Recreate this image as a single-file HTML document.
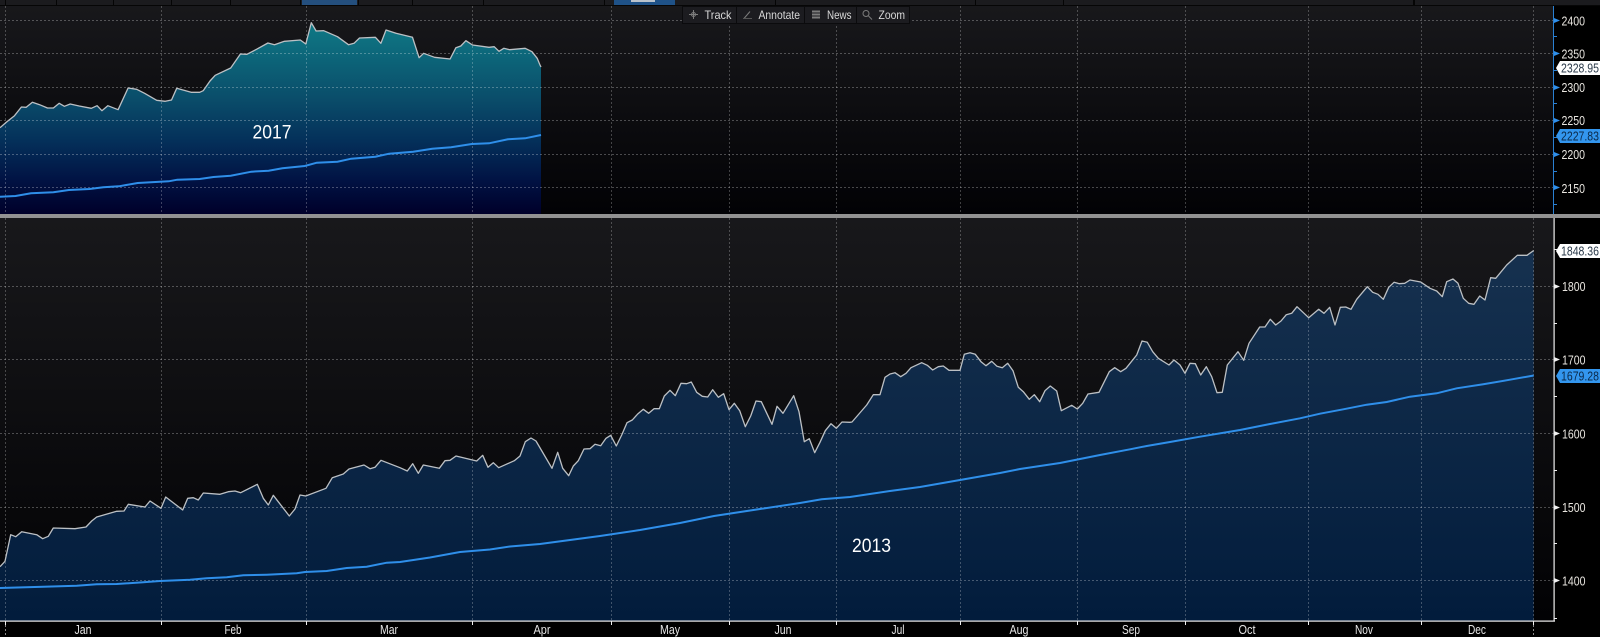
<!DOCTYPE html>
<html><head><meta charset="utf-8"><title>Chart</title>
<style>
html,body{margin:0;padding:0;background:#000;width:1600px;height:637px;overflow:hidden}
svg{display:block}
text{font-family:"Liberation Sans",sans-serif}
</style></head><body>
<svg xmlns="http://www.w3.org/2000/svg" width="1600" height="637" viewBox="0 0 1600 637">
<defs>
<linearGradient id="bg1" x1="0" y1="0" x2="0" y2="1"><stop offset="0" stop-color="#18181b"/><stop offset="1" stop-color="#020205"/></linearGradient>
<linearGradient id="bg2" x1="0" y1="0" x2="0" y2="1"><stop offset="0" stop-color="#18181b"/><stop offset="1" stop-color="#020204"/></linearGradient>
<linearGradient id="f1" gradientUnits="userSpaceOnUse" x1="0" y1="22" x2="0" y2="214"><stop offset="0" stop-color="#0f7a86"/><stop offset=".4" stop-color="#0a4d6a"/><stop offset=".62" stop-color="#04305a"/><stop offset=".82" stop-color="#011344"/><stop offset="1" stop-color="#00002a"/></linearGradient>
<linearGradient id="f2" gradientUnits="userSpaceOnUse" x1="0" y1="250" x2="0" y2="621"><stop offset="0" stop-color="#16314f"/><stop offset="1" stop-color="#021c3c"/></linearGradient>
</defs>
<rect width="1600" height="637" fill="#000"/>
<!-- top strip -->
<rect x="0" y="0" width="1600" height="5" fill="#1b1b1e"/>
<rect x="0" y="5" width="1600" height="1" fill="#060606"/>
<g fill="#050505">
<rect x="5" y="0" width="1" height="5"/><rect x="56" y="0" width="1" height="5"/><rect x="113" y="0" width="1" height="5"/><rect x="171" y="0" width="1" height="5"/><rect x="230" y="0" width="1" height="5"/><rect x="300" y="0" width="1" height="5"/><rect x="358" y="0" width="1" height="5"/><rect x="412" y="0" width="1" height="5"/><rect x="483" y="0" width="1" height="5"/><rect x="604" y="0" width="1" height="5"/><rect x="775" y="0" width="1" height="5"/><rect x="975" y="0" width="1" height="5"/><rect x="1063" y="0" width="1" height="5"/><rect x="1413" y="0" width="2" height="5"/>
</g>
<rect x="302" y="0" width="55" height="5" fill="#244f7e"/>
<rect x="614" y="0" width="61" height="5" fill="#1f5288"/>
<rect x="631" y="0" width="24" height="2" fill="#b9c2cc"/>

<!-- plot backgrounds -->
<rect x="0" y="6" width="1553" height="208" fill="url(#bg1)"/>
<rect x="0" y="218" width="1554" height="403" fill="url(#bg2)"/>

<!-- fills -->
<polygon fill="url(#f1)" points="0,127.7 6.9,121.7 14.5,115.7 21.4,107 26.2,107.3 32.4,102.3 39.6,104.7 47.5,108 53.4,108 59.2,103.3 64.4,106.3 70.2,104 79.2,106 91.3,108.3 97.1,105.7 101.9,110.7 107.8,105.7 118.1,109.7 128.1,88 136.7,89.3 144.6,93.3 156.7,100.3 165.3,101.3 171.5,100 176.7,88.3 191.1,92.3 199.7,92.3 203.2,90.7 210,81 215.2,75.3 230.7,68 240.4,54 246.9,54.3 256.5,49.3 267.9,43 274.5,44.7 284.4,41.3 300.3,40 305.8,44 311.3,22.7 316.1,31 323.7,30.7 337.5,36.7 348.5,44.7 354,43.3 359.5,38 375.4,37.3 380.9,43.3 386,30 396,33.3 412.5,37.3 419.1,57.7 423.6,53.3 434.6,57.3 450.1,59 455.9,47.7 460.8,46 465.9,40.7 472.5,45 489,47.3 494.2,46.7 499,51.3 503.8,48.3 509.7,49.7 525.2,48.3 532,51.7 537.2,58.3 540,65 541,67 541,214 0,214"/>
<polygon fill="url(#f2)" points="0,566.7 5,561.3 10.7,534.7 15.7,536.7 21.7,531.7 36.7,534.7 42.7,538.7 48.3,536.3 53.3,528 75,528.7 86,527 91.7,521 96.7,517 116.7,511.3 124,511 128.3,504.3 145,507 150,501 161,508.3 165.7,497 182.7,510 187.7,498.3 193.3,497.7 198.3,500 203.3,493 220,494.3 228.3,491.7 235,491 240.7,492.7 257.3,484.3 263.3,498.3 268.3,505 273.3,495.3 289.3,516 295,509 300,495 305.7,496 326,488.3 332.3,477.7 343.3,474 349,469 364,465 370,468.7 375,467.3 381,460.3 400,467.7 407.3,471 412.7,463.7 418.3,473.3 423.3,465 439.3,468.3 445,460.7 450,460.3 456,456 476.7,461 482.7,455.3 488,467.3 493.3,462.7 498.7,467.7 514.3,460.7 520,456 525.3,441.7 531,438 536,441 552,468.3 557.7,452.3 562.7,468.3 568.7,475.7 573.3,466 578.3,460.7 584,449 590,448.7 595,444.3 600.7,445.7 606,438.3 610.7,435.3 616.3,446 621.7,435 627,422.7 632.3,420 637.7,414 643.3,409.3 648.7,413.3 654,408.7 659.3,408.7 664.3,396 670,390.3 675.3,395.7 681,383.3 686.7,383.7 691.3,382 696.7,392.3 702.3,396.3 707.7,397 712.7,389.7 718.3,397.3 723.7,393.7 729,409.7 734.3,403.3 739.7,410.7 745.3,426.7 750.7,416 756,401 761.3,401.7 772,424.3 777,406.3 783,413.3 793.7,395.7 799,411.7 804.3,441.7 809.3,438.7 814.7,452.7 820,442.3 825.3,430.7 831,423.7 836.3,428.3 842,422 850,422.3 852,422 866.7,405 873.3,394.7 880,394.7 885,377.3 890,374 895,372.7 900.7,376.7 906,373.3 911,367.7 921.7,362.7 927.3,365.3 932.7,370 938.3,366.7 943.3,366 949,370.3 960,370.3 964.3,354.3 970,352.7 975.3,354.3 981,361.7 986,365.7 991.7,361.3 997,366.3 1002.3,367.7 1007.7,363.3 1013,370.7 1018.3,387.3 1023.3,391.7 1029.3,399.3 1034.3,394.7 1039.7,401.7 1045,390.7 1050.3,386 1056.7,391 1061.3,410.7 1071.7,405.3 1077.3,409 1082.7,403.3 1088,394 1099,392.3 1109.3,371.7 1114.7,367.7 1120.7,371.7 1126,368.3 1136.7,355 1142,341 1147.3,342.3 1152.7,351.7 1158.3,358.3 1169,365 1174,360 1180,365 1185,373.3 1190,363.3 1195.3,363.7 1200.7,375 1206.3,366.7 1211.7,376.7 1217,392.7 1222.3,392.3 1227.3,365 1238,351.7 1243.7,360.3 1249,343.3 1259.7,327 1265,327 1270.3,319.3 1275.7,325 1281,321 1286.3,314.7 1291.7,313.3 1297,306.7 1308.7,317.7 1318.7,309.3 1324,313.3 1329.7,307.3 1335,325 1340.3,307.3 1345.7,307 1351,309.3 1356.7,299.3 1367.3,286.7 1372.7,292.3 1378,294.3 1383.3,299.3 1388.7,287.3 1394,282.3 1399.3,283.7 1404.7,283.3 1410,280 1420.7,282 1430,288.3 1436.7,291 1442.3,296.7 1446.7,281.7 1453,279 1458,283.3 1463.3,298.3 1468.7,303.3 1474,304.3 1479.7,296 1485,300 1490.7,277.7 1495.7,278.3 1506.7,265 1517.3,255.3 1527,255.3 1533.7,250.5 1533.7,621 0,621"/>

<!-- grid -->
<g stroke="#fff" stroke-opacity=".27" stroke-width="1" stroke-dasharray="2 2" fill="none">
<path d="M0 20.5H1553M0 53.5H1553M0 87.5H1553M0 120.5H1553M0 154.5H1553M0 187.5H1553"/>
<path d="M0 286.5H1554M0 359.5H1554M0 433.5H1554M0 507.5H1554M0 580.5H1554"/>
<path stroke-opacity=".24" d="M5.5 6V214M161.5 6V214M306.5 6V214M472.5 6V214M611.5 6V214M729.5 6V214M836.5 6V214M960.5 6V214M1077.5 6V214M1185.5 6V214M1308.5 6V214M1421.5 6V214M1533.5 6V214"/>
<path stroke-opacity=".24" d="M5.5 218V621M161.5 218V621M306.5 218V621M472.5 218V621M611.5 218V621M729.5 218V621M836.5 218V621M960.5 218V621M1077.5 218V621M1185.5 218V621M1308.5 218V621M1421.5 218V621M1533.5 218V621"/>
</g>

<!-- lines -->
<polyline fill="none" stroke="#bcc0c4" stroke-width="1.3" stroke-linejoin="round" points="0,127.7 6.9,121.7 14.5,115.7 21.4,107 26.2,107.3 32.4,102.3 39.6,104.7 47.5,108 53.4,108 59.2,103.3 64.4,106.3 70.2,104 79.2,106 91.3,108.3 97.1,105.7 101.9,110.7 107.8,105.7 118.1,109.7 128.1,88 136.7,89.3 144.6,93.3 156.7,100.3 165.3,101.3 171.5,100 176.7,88.3 191.1,92.3 199.7,92.3 203.2,90.7 210,81 215.2,75.3 230.7,68 240.4,54 246.9,54.3 256.5,49.3 267.9,43 274.5,44.7 284.4,41.3 300.3,40 305.8,44 311.3,22.7 316.1,31 323.7,30.7 337.5,36.7 348.5,44.7 354,43.3 359.5,38 375.4,37.3 380.9,43.3 386,30 396,33.3 412.5,37.3 419.1,57.7 423.6,53.3 434.6,57.3 450.1,59 455.9,47.7 460.8,46 465.9,40.7 472.5,45 489,47.3 494.2,46.7 499,51.3 503.8,48.3 509.7,49.7 525.2,48.3 532,51.7 537.2,58.3 540,65 541,67"/>
<polyline fill="none" stroke="#bcc0c4" stroke-width="1.3" stroke-linejoin="round" points="0,566.7 5,561.3 10.7,534.7 15.7,536.7 21.7,531.7 36.7,534.7 42.7,538.7 48.3,536.3 53.3,528 75,528.7 86,527 91.7,521 96.7,517 116.7,511.3 124,511 128.3,504.3 145,507 150,501 161,508.3 165.7,497 182.7,510 187.7,498.3 193.3,497.7 198.3,500 203.3,493 220,494.3 228.3,491.7 235,491 240.7,492.7 257.3,484.3 263.3,498.3 268.3,505 273.3,495.3 289.3,516 295,509 300,495 305.7,496 326,488.3 332.3,477.7 343.3,474 349,469 364,465 370,468.7 375,467.3 381,460.3 400,467.7 407.3,471 412.7,463.7 418.3,473.3 423.3,465 439.3,468.3 445,460.7 450,460.3 456,456 476.7,461 482.7,455.3 488,467.3 493.3,462.7 498.7,467.7 514.3,460.7 520,456 525.3,441.7 531,438 536,441 552,468.3 557.7,452.3 562.7,468.3 568.7,475.7 573.3,466 578.3,460.7 584,449 590,448.7 595,444.3 600.7,445.7 606,438.3 610.7,435.3 616.3,446 621.7,435 627,422.7 632.3,420 637.7,414 643.3,409.3 648.7,413.3 654,408.7 659.3,408.7 664.3,396 670,390.3 675.3,395.7 681,383.3 686.7,383.7 691.3,382 696.7,392.3 702.3,396.3 707.7,397 712.7,389.7 718.3,397.3 723.7,393.7 729,409.7 734.3,403.3 739.7,410.7 745.3,426.7 750.7,416 756,401 761.3,401.7 772,424.3 777,406.3 783,413.3 793.7,395.7 799,411.7 804.3,441.7 809.3,438.7 814.7,452.7 820,442.3 825.3,430.7 831,423.7 836.3,428.3 842,422 850,422.3 852,422 866.7,405 873.3,394.7 880,394.7 885,377.3 890,374 895,372.7 900.7,376.7 906,373.3 911,367.7 921.7,362.7 927.3,365.3 932.7,370 938.3,366.7 943.3,366 949,370.3 960,370.3 964.3,354.3 970,352.7 975.3,354.3 981,361.7 986,365.7 991.7,361.3 997,366.3 1002.3,367.7 1007.7,363.3 1013,370.7 1018.3,387.3 1023.3,391.7 1029.3,399.3 1034.3,394.7 1039.7,401.7 1045,390.7 1050.3,386 1056.7,391 1061.3,410.7 1071.7,405.3 1077.3,409 1082.7,403.3 1088,394 1099,392.3 1109.3,371.7 1114.7,367.7 1120.7,371.7 1126,368.3 1136.7,355 1142,341 1147.3,342.3 1152.7,351.7 1158.3,358.3 1169,365 1174,360 1180,365 1185,373.3 1190,363.3 1195.3,363.7 1200.7,375 1206.3,366.7 1211.7,376.7 1217,392.7 1222.3,392.3 1227.3,365 1238,351.7 1243.7,360.3 1249,343.3 1259.7,327 1265,327 1270.3,319.3 1275.7,325 1281,321 1286.3,314.7 1291.7,313.3 1297,306.7 1308.7,317.7 1318.7,309.3 1324,313.3 1329.7,307.3 1335,325 1340.3,307.3 1345.7,307 1351,309.3 1356.7,299.3 1367.3,286.7 1372.7,292.3 1378,294.3 1383.3,299.3 1388.7,287.3 1394,282.3 1399.3,283.7 1404.7,283.3 1410,280 1420.7,282 1430,288.3 1436.7,291 1442.3,296.7 1446.7,281.7 1453,279 1458,283.3 1463.3,298.3 1468.7,303.3 1474,304.3 1479.7,296 1485,300 1490.7,277.7 1495.7,278.3 1506.7,265 1517.3,255.3 1527,255.3 1533.7,250.5"/>
<polyline fill="none" stroke="#2f8fea" stroke-width="2" points="0,196.7 15.5,196 31,193.3 53.4,192.3 68.9,190 89.5,189 103.3,187.3 118.8,186.3 137.7,183 168.7,181.3 177.3,179.7 199.7,179 213.5,177 230.7,175.7 251.4,171.7 268.6,170.7 282.4,168.3 304.8,166 316.8,162.7 337.5,161.7 351.2,158.7 375.4,156.7 389.1,153.7 413.2,151.7 432.2,148.7 451.1,147.3 471.8,144 489,143.3 507.9,139.3 525.1,138.3 541,135"/>
<polyline fill="none" stroke="#2f8fea" stroke-width="2" points="0,588 43.3,586.7 76.7,585.7 96.7,584.3 116.7,584 143.3,582.3 160,581 190,579.7 206.7,578.3 226.7,577.3 243.3,575.3 266.7,574.7 296.7,573.3 305,572 326.7,571 346.7,568 366.7,566.7 386.7,562.7 400,562 430,557.5 460,552 490,549.5 510,546.5 540,544 570,540 600,536 640,530 680,523 714,516 760,509 800,503 821.7,499.3 850,497 890,491 920,487 960,480 1000,473 1020,469 1060,463 1100,455 1130,449.3 1146.7,446 1170,442 1200,436.7 1240,430 1270,424 1300,418.3 1320,413.7 1343.3,409.3 1366.7,404.7 1386.7,402 1410,396.7 1436.7,393.3 1456.7,388.3 1483.3,384.3 1510,379.7 1533.7,375.5"/>

<!-- divider -->
<rect x="0" y="214" width="1600" height="4" fill="#929292"/>

<!-- axes -->
<rect x="1553" y="6" width="1" height="208" fill="#2a80d2"/>
<rect x="1553.5" y="218" width="1.2" height="403" fill="#f0f0f0"/>
<rect x="0" y="620.5" width="1555" height="1.2" fill="#f0f0f0"/>
<g stroke="#2a80d2" stroke-width="1"><path d="M1554 36.5h3M1554 70.5h3M1554 103.5h3M1554 137.5h3M1554 171.5h3M1554 204.5h3"/></g>
<g fill="#2f8fea"><path d="M1554 18l6 2.5-6 2.5zM1554 51l6 2.5-6 2.5zM1554 85l6 2.5-6 2.5zM1554 118l6 2.5-6 2.5zM1554 152l6 2.5-6 2.5zM1554 185l6 2.5-6 2.5z"/></g>
<g stroke="#f0f0f0" stroke-width="1"><path d="M1554 323.5h3M1554 396.5h3M1554 470.5h3M1554 543.5h3M1554 618.5h3M1554 249.5h3"/></g>
<g fill="#f0f0f0"><path d="M1554 284l6 2.5-6 2.5zM1554 357l6 2.5-6 2.5zM1554 431l6 2.5-6 2.5zM1554 505l6 2.5-6 2.5zM1554 578l6 2.5-6 2.5z"/></g>
<g stroke="#f0f0f0" stroke-width="1"><path d="M5.5 621v4M161.5 621v4M306.5 621v4M472.5 621v4M611.5 621v4M729.5 621v4M836.5 621v4M960.5 621v4M1077.5 621v4M1185.5 621v4M1308.5 621v4M1421.5 621v4M1533.5 621v4"/></g>
<g stroke="#8a8a8a" stroke-width="1" stroke-dasharray="2 2"><path d="M5.5 625V637M1533.5 625V637"/></g>

<!-- axis labels -->
<g fill="#e9e6e0" font-size="13">
<text x="1561.5" y="25.5" textLength="23.5" lengthAdjust="spacingAndGlyphs">2400</text>
<text x="1561.5" y="58.5" textLength="23.5" lengthAdjust="spacingAndGlyphs">2350</text>
<text x="1561.5" y="92" textLength="23.5" lengthAdjust="spacingAndGlyphs">2300</text>
<text x="1561.5" y="125" textLength="23.5" lengthAdjust="spacingAndGlyphs">2250</text>
<text x="1561.5" y="159" textLength="23.5" lengthAdjust="spacingAndGlyphs">2200</text>
<text x="1561.5" y="193" textLength="23.5" lengthAdjust="spacingAndGlyphs">2150</text>
<text x="1562" y="291" textLength="23.5" lengthAdjust="spacingAndGlyphs">1800</text>
<text x="1562" y="364.5" textLength="23.5" lengthAdjust="spacingAndGlyphs">1700</text>
<text x="1562" y="438.5" textLength="23.5" lengthAdjust="spacingAndGlyphs">1600</text>
<text x="1562" y="512" textLength="23.5" lengthAdjust="spacingAndGlyphs">1500</text>
<text x="1562" y="585.5" textLength="23.5" lengthAdjust="spacingAndGlyphs">1400</text>
</g>

<!-- value tags -->
<path d="M1556 68l4-7h40v14h-40z" fill="#fff"/>
<path d="M1556 136l4-7h40v14h-40z" fill="#3396ee"/>
<path d="M1556 251l4-7h40v14h-40z" fill="#fff"/>
<path d="M1556 376l4-7h40v14h-40z" fill="#3396ee"/>
<g font-size="13" fill="#2b3a4a">
<text x="1561" y="72.5" textLength="38" lengthAdjust="spacingAndGlyphs">2328.95</text>
<text x="1561" y="140.5" textLength="38" lengthAdjust="spacingAndGlyphs" fill="#0b2a4a">2227.83</text>
<text x="1561" y="255.5" textLength="38" lengthAdjust="spacingAndGlyphs">1848.36</text>
<text x="1561" y="380.5" textLength="38" lengthAdjust="spacingAndGlyphs" fill="#0b2a4a">1679.28</text>
</g>

<!-- months -->
<g fill="#e4e4e4" font-size="12.5" text-anchor="middle">
<text x="83" y="634" textLength="17" lengthAdjust="spacingAndGlyphs">Jan</text><text x="233" y="634" textLength="17" lengthAdjust="spacingAndGlyphs">Feb</text><text x="389" y="634" textLength="18" lengthAdjust="spacingAndGlyphs">Mar</text><text x="542" y="634" textLength="17" lengthAdjust="spacingAndGlyphs">Apr</text><text x="670" y="634" textLength="20" lengthAdjust="spacingAndGlyphs">May</text><text x="783" y="634" textLength="17" lengthAdjust="spacingAndGlyphs">Jun</text><text x="898" y="634" textLength="13" lengthAdjust="spacingAndGlyphs">Jul</text><text x="1019" y="634" textLength="19" lengthAdjust="spacingAndGlyphs">Aug</text><text x="1131" y="634" textLength="18" lengthAdjust="spacingAndGlyphs">Sep</text><text x="1247" y="634" textLength="17" lengthAdjust="spacingAndGlyphs">Oct</text><text x="1364" y="634" textLength="18" lengthAdjust="spacingAndGlyphs">Nov</text><text x="1477" y="634" textLength="18" lengthAdjust="spacingAndGlyphs">Dec</text>
</g>

<!-- year labels -->
<text x="272" y="138.5" fill="#fff" font-size="19" text-anchor="middle" textLength="39" lengthAdjust="spacingAndGlyphs">2017</text>
<text x="871.5" y="552" fill="#fff" font-size="19" text-anchor="middle" textLength="39" lengthAdjust="spacingAndGlyphs">2013</text>

<!-- toolbar -->
<rect x="682.5" y="6.5" width="227" height="17" fill="#1c1c20" stroke="#0b0b0d"/>
<path d="M736.5 7v16M804.5 7v16M856.5 7v16" stroke="#0b0b0d"/>
<g fill="#d8d8d8" font-size="12">
<text x="704.5" y="19" textLength="27" lengthAdjust="spacingAndGlyphs">Track</text>
<text x="758.5" y="19" textLength="41.5" lengthAdjust="spacingAndGlyphs">Annotate</text>
<text x="827" y="19" textLength="24.5" lengthAdjust="spacingAndGlyphs">News</text>
<text x="878.5" y="19" textLength="26.5" lengthAdjust="spacingAndGlyphs">Zoom</text>
</g>
<g stroke="#7c7c7c" stroke-width="1" fill="none">
<path d="M693.5 10v9M689 14.5h9"/><circle cx="693.5" cy="14.5" r="2"/>
<path d="M744 18.5l6-7"/><path d="M743 18.5h9" stroke="#555"/>
<path d="M812 11.5h8M812 14.5h8M812 17.5h8" stroke-width="2"/>
<circle cx="866" cy="13.5" r="3"/><path d="M868.5 16l3.5 3.5"/>
</g>
</svg>
</body></html>
